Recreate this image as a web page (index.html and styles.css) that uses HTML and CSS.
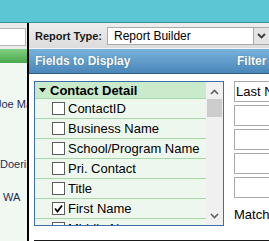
FILE: index.html
```html
<!DOCTYPE html>
<html>
<head>
<meta charset="utf-8">
<link rel="stylesheet" href="styles.css">
</head>
<body>
<div class="page">
  <header class="topbar"></header>
  <div class="body">
    <aside class="left">
      <div class="left-search"><div class="left-input"></div></div>
      <div class="left-green"></div>
      <div class="left-list">
        <div class="left-row row-a">Joe Main St</div>
        <div class="left-row row-b">Doering</div>
        <div class="left-row row-c">WA</div>
      </div>
    </aside>
    <main class="main">
      <div class="toolbar">
        <span class="tb-label">Report Type:</span>
        <div class="select">
          <span class="select-text">Report Builder</span>
          <span class="select-btn">
            <svg width="9" height="6" viewBox="0 0 9 6"><polyline points="1,1 4.5,4.5 8,1" fill="none" stroke="#3a3a3a" stroke-width="1.8"/></svg>
          </span>
        </div>
      </div>
      <div class="section-bar">
        <span class="bar-title">Fields to Display</span>
        <span class="bar-title filter-title">Filter <span class="bar-extra">Criteria</span></span>
      </div>
      <div class="section-body">
        <div class="fields-col">
          <div class="listbox">
            <div class="list-items">
              <div class="list-head">
                <svg class="tri" width="7" height="5" viewBox="0 0 7 5"><polygon points="0,0 7,0 3.5,4.5" fill="#111"/></svg>
                <span>Contact Detail</span>
              </div>
              <div class="list-row"><span class="cb"></span><span>ContactID</span></div>
              <div class="list-row"><span class="cb"></span><span>Business Name</span></div>
              <div class="list-row"><span class="cb"></span><span>School/Program Name</span></div>
              <div class="list-row"><span class="cb"></span><span>Pri. Contact</span></div>
              <div class="list-row"><span class="cb"></span><span>Title</span></div>
              <div class="list-row"><span class="cb checked"><svg width="11" height="11" viewBox="0 0 11 11"><polyline points="2,5.5 4.5,8.5 9,2.5" fill="none" stroke="#000" stroke-width="1.8"/></svg></span><span>First Name</span></div>
              <div class="list-row"><span class="cb"></span><span>Middle Name</span></div>
            </div>
            <div class="scrollbar">
              <svg class="sb-arrow" width="9" height="6" viewBox="0 0 9 6"><polyline points="1,5 4.5,1.5 8,5" fill="none" stroke="#606060" stroke-width="1.6"/></svg>
              <div class="sb-thumb"></div>
              <div class="sb-track"></div>
              <svg class="sb-arrow" width="9" height="6" viewBox="0 0 9 6"><polyline points="1,1 4.5,4.5 8,1" fill="none" stroke="#606060" stroke-width="1.6"/></svg>
            </div>
          </div>
        </div>
        <div class="filter-col">
          <div class="f-input">Last Name</div>
          <div class="f-input"></div>
          <div class="f-input"></div>
          <div class="f-input"></div>
          <div class="f-input"></div>
          <div class="match">Match</div>
        </div>
      </div>
      <div class="next-box"></div>
    </main>
  </div>
</div>
</body>
</html>
```

FILE: styles.css
```css
* { box-sizing: border-box; }
html, body { margin: 0; padding: 0; }
body {
  width: 269px;
  height: 241px;
  overflow: hidden;
  background: #fff;
  font-family: "Liberation Sans", Arial, sans-serif;
  color: #000;
}
.page { display: flex; flex-direction: column; height: 241px; }
.topbar {
  flex: none;
  height: 23px;
  background: #5cc6d5;
  border-bottom: 1px solid #3a8d99;
}
.body { flex: 1; display: flex; min-height: 0; }

/* left column */
.left {
  flex: none;
  width: 29px;
  border-right: 2px solid #000;
  background: #f1f8f1;
  overflow: hidden;
  display: flex;
  flex-direction: column;
}
.left-search {
  height: 26px;
  background: #ebebeb;
  padding-top: 5px;
}
.left-input {
  width: 46px;
  height: 18px;
  margin-left: -20px;
  background: #fff;
  border: 1px solid #b4b4b4;
}
.left-green {
  height: 14px;
  background: linear-gradient(#82cf82, #4aa84a);
}
.left-list { font-size: 11px; color: #1d2c58; }
.left-row { white-space: nowrap; line-height: 13px; }
.row-a { margin-top: 35px; text-indent: -4px; }
.row-b { margin-top: 47px; }
.row-c { margin-top: 20px; padding-left: 3px; }

/* main */
.main {
  flex: 1;
  min-width: 0;
  overflow: hidden;
  display: flex;
  flex-direction: column;
}
.toolbar {
  flex: none;
  height: 25px;
  display: flex;
  align-items: center;
  padding-left: 6px;
  gap: 5px;
  background: linear-gradient(#eeeeee, #dcdcdc);
}
.tb-label { font-size: 11px; font-weight: bold; color: #1a1a1a; white-space: nowrap; }
.select {
  flex: none;
  width: 163px;
  height: 18px;
  display: flex;
  align-items: center;
  background: #fff;
  border: 1px solid #aaaaaa;
  padding-left: 6px;
  margin-top: 1px;
}
.select-text { flex: 1; font-size: 12px; white-space: nowrap; }
.select-btn {
  flex: none;
  width: 16px;
  height: 16px;
  background: #e4e4e4;
  border-left: 1px solid #a8a8a8;
  display: flex;
  align-items: center;
  justify-content: center;
}
.section-bar {
  flex: none;
  height: 26px;
  display: grid;
  grid-template-columns: 205px 1fr;
  align-items: center;
  background: linear-gradient(#79b3dc, #4a86b9);
  border-top: 1px solid #f4f4f4;
  border-bottom: 1px solid #2e5c84;
}
.bar-title {
  font-size: 12px;
  font-weight: bold;
  color: #fff;
  white-space: nowrap;
  padding-left: 6px;
  text-shadow: 0 0 1px #2e5c84;
}
.filter-title { padding-left: 3px; }
.bar-extra { color: #9ee6f7; }

.section-body {
  flex: none;
  height: 166px;
  display: grid;
  grid-template-columns: 205px 1fr;
}
.fields-col { padding: 7px 0 0 5px; }
.listbox {
  width: 190px;
  height: 145px;
  border: 1px solid #3f6ea6;
  display: flex;
  background: #eef7ee;
}
.list-items { flex: 1; overflow: hidden; font-size: 13px; }
.list-head {
  height: 17px;
  display: flex;
  align-items: center;
  gap: 4px;
  padding-left: 4px;
  background: #c9eacb;
  border-bottom: 1px solid #a6d8a8;
  font-weight: bold;
  white-space: nowrap;
}
.list-row {
  height: 20px;
  display: flex;
  align-items: center;
  gap: 3px;
  padding-left: 17px;
  border-bottom: 1px solid #a6d8a8;
  white-space: nowrap;
}
.cb {
  flex: none;
  width: 13px;
  height: 13px;
  background: #fff;
  border: 1px solid #5c5c5c;
  display: flex;
  align-items: center;
  justify-content: center;
}
.scrollbar {
  flex: none;
  width: 17px;
  background: #f0f0f0;
  display: flex;
  flex-direction: column;
  align-items: center;
}
.sb-arrow { flex: none; margin: 7px 0 4px; }
.sb-arrow:last-child { margin: 4px 0 6px; }
.sb-thumb { flex: none; width: 15px; height: 18px; background: #cdcdcd; }
.sb-track { flex: 1; }

.filter-col { padding-top: 7px; }
.f-input {
  width: 60px;
  height: 21px;
  margin-bottom: 3px;
  border: 1px solid #a8a8a8;
  background: #fff;
  font-size: 13px;
  line-height: 19px;
  padding-left: 1px;
  white-space: nowrap;
}
.match { font-size: 13px; margin-top: 9px; }

.next-box {
  flex: 1;
  margin-left: 5px;
  border-top: 1px solid #1a1a1a;
  background: #5cb85c;
}
```
